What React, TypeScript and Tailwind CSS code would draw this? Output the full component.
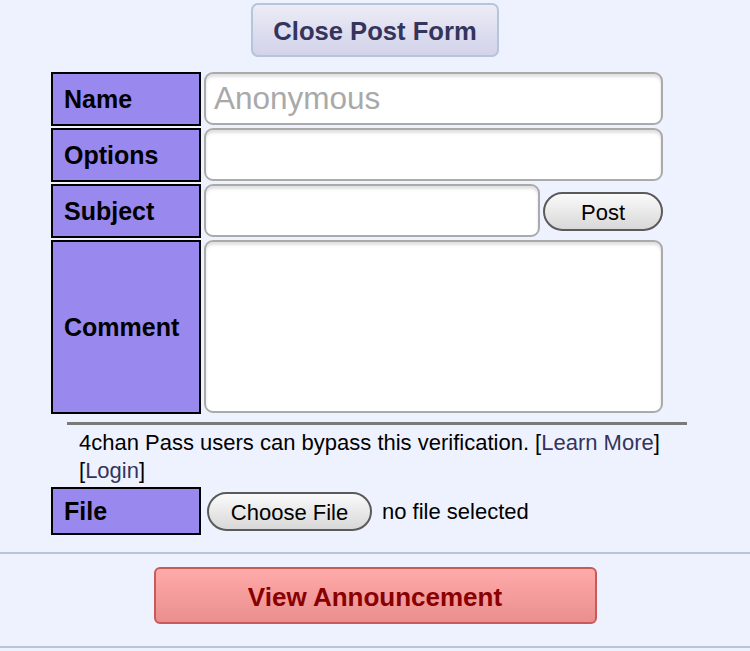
import React from "react";

const Label = ({ children, h }: { children: React.ReactNode; h: string }) => (
  <div
    className={`w-[150px] ${h} shrink-0 border-2 border-black bg-[#9988ee] flex items-center pl-[11px] text-[25px] font-bold text-black leading-none`}
  >
    {children}
  </div>
);

const inputCls =
  "bg-white border-2 border-[#aaaaaa] rounded-[9px] shadow-[inset_0_3px_3px_rgba(0,0,0,0.12)]";

export default function App() {
  return (
    <div className="w-[750px] h-[651px] overflow-hidden bg-[#eef2ff] font-['Liberation_Sans',Arial,sans-serif] text-black">
      <div className="flex justify-center pt-[3px]">
        <button className="w-[248px] h-[54px] pt-[3px] rounded-[7px] border-2 border-[#b7c5d9] bg-gradient-to-b from-[#ececf6] to-[#d2d2ea] text-[25.6px] font-bold text-[#34345c] leading-none">
          Close Post Form
        </button>
      </div>

      <div className="ml-[51px] mt-[15px] w-[612px] flex flex-col gap-[2px]">
        <div className="flex gap-[3px] h-[54px]">
          <Label h="h-[54px]">Name</Label>
          <div className={`${inputCls} flex-1 h-[53px] flex items-center pl-[8px]`}>
            <span className="text-[31.5px] text-[#a9a9a9] leading-none">Anonymous</span>
          </div>
        </div>
        <div className="flex gap-[3px] h-[54px]">
          <Label h="h-[54px]">Options</Label>
          <div className={`${inputCls} flex-1 h-[53px]`} />
        </div>
        <div className="flex gap-[3px] h-[54px]">
          <Label h="h-[54px]">Subject</Label>
          <div className={`${inputCls} w-[339px] h-[53px]`} />
          <div className="flex-1 flex items-center">
            <button className="w-[120px] h-[39px] pt-[3px] rounded-full border-2 border-[#5a5a5a] bg-gradient-to-b from-[#fafafa] to-[#d8d8d8] text-[22px] leading-none text-black">
              Post
            </button>
          </div>
        </div>
        <div className="flex gap-[3px] h-[174px]">
          <Label h="h-[174px]">Comment</Label>
          <div className={`${inputCls} flex-1 h-[173px]`} />
        </div>
      </div>

      <div className="ml-[67px] mt-[8px] w-[620px] h-[3px] bg-[#7a7a7a]" />

      <div className="pl-[79px] mt-[4px] text-[22px] leading-[28px] text-black">
        <div>
          4chan Pass users can bypass this verification. [<span className="text-[#34345c]">Learn More</span>]
        </div>
        <div>
          [<span className="text-[#34345c]">Login</span>]
        </div>
      </div>

      <div className="ml-[51px] mt-[2px] flex items-center h-[48px]">
        <Label h="h-[48px]">File</Label>
        <button className="ml-[6px] w-[165px] h-[39px] pt-[3px] rounded-full border-2 border-[#5a5a5a] bg-gradient-to-b from-[#fafafa] to-[#d8d8d8] text-[22px] leading-none text-black">
          Choose File
        </button>
        <span className="ml-[10px] pt-[2px] text-[22px] leading-none">no file selected</span>
      </div>

      <div className="mt-[17px] h-[2px] bg-[#b7c5d9]" />

      <div className="flex justify-center mt-[13px]">
        <button className="w-[443px] h-[57px] pt-[2px] rounded-[6px] border-2 border-[#c85a5a] bg-gradient-to-b from-[#ffaaaa] to-[#ea8e8e] text-[26px] font-bold text-[#880000] leading-none">
          View Announcement
        </button>
      </div>

      <div className="mt-[22px] h-[2px] bg-[#b7c5d9]" />
    </div>
  );
}
